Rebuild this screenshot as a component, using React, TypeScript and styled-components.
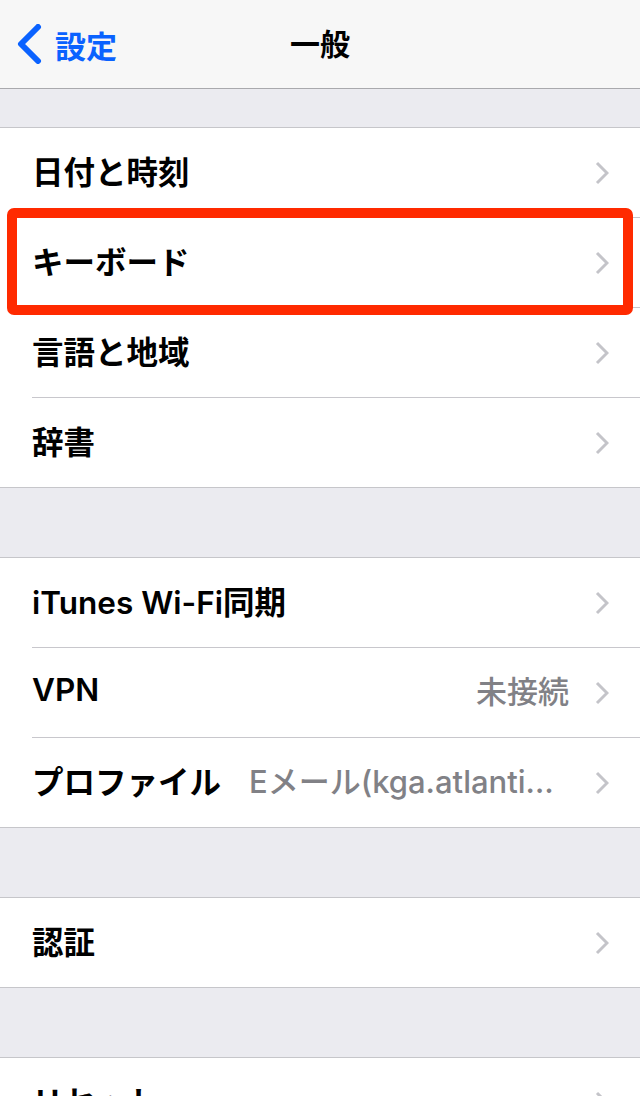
import React from "react";
import styled, { createGlobalStyle } from "styled-components";

const GlobalStyle = createGlobalStyle`
  html, body {
    margin: 0;
    padding: 0;
    background: #ebebf0;
  }
  body {
    font-family: "Inter", "Noto Sans CJK JP", sans-serif;
    -webkit-font-smoothing: antialiased;
  }
`;

const Page = styled.div`
  width: 640px;
  height: 1096px;
  overflow: hidden;
  background: #ebebf0;
`;

const NavBar = styled.header`
  position: relative;
  height: 89px;
  display: flex;
  align-items: center;
  justify-content: center;
  background: #f7f7f7;
  border-bottom: 1px solid #a9a9ad;
  box-sizing: border-box;
`;

const BackButton = styled.div`
  position: absolute;
  left: 16px;
  top: 0;
  bottom: 0;
  display: flex;
  align-items: center;
  gap: 13px;
  color: #0a62ff;
  font-size: 31px;
  font-weight: 600;
`;

const Title = styled.h1`
  margin: 0 0 4px;
  font-size: 30px;
  font-weight: 700;
  color: #000;
`;

const Gap = styled.div<{ $h: number }>`
  height: ${(p) => p.$h}px;
`;

const Group = styled.section`
  background: #fff;
  border-top: 1px solid #c6c6ca;
  border-bottom: 1px solid #c6c6ca;
`;

const RowInner = styled.div<{ $divider: boolean }>`
  height: 89px;
  display: flex;
  align-items: center;
  padding-right: 31px;
  border-bottom: ${(p) => (p.$divider ? "1px solid #c8c7cc" : "none")};
`;

const RowWrap = styled.div`
  position: relative;
  padding-left: 32px;
`;

const Label = styled.span`
  margin-bottom: 6px;
  font-size: 31.5px;
  font-weight: 600;
  color: #000;
  white-space: nowrap;
  flex-shrink: 0;
`;

const Value = styled.span`
  flex: 1;
  min-width: 0;
  margin-left: 28px;
  margin-right: 26px;
  margin-bottom: 6px;
  text-align: right;
  font-size: 31px;
  font-weight: 500;
  color: #818186;
  white-space: nowrap;
  overflow: hidden;
  text-overflow: ellipsis;
`;

const Spacer = styled.span`
  flex: 1;
`;

const Highlight = styled.div`
  position: absolute;
  left: 7px;
  right: 7px;
  top: -10px;
  bottom: -7px;
  border: 10px solid #ff2a00;
  border-radius: 7px;
  pointer-events: none;
`;

const Chevron = () => (
  <svg width="14" height="24" viewBox="0 0 14 24" style={{ flexShrink: 0 }}>
    <path
      d="M2 2 L12 12 L2 22"
      fill="none"
      stroke="#c4c4c9"
      strokeWidth="3"
      strokeLinecap="butt"
      strokeLinejoin="miter"
    />
  </svg>
);

const BackChevron = () => (
  <svg width="26" height="40" viewBox="0 0 26 40">
    <path
      d="M22 3 L5 20 L22 37"
      fill="none"
      stroke="#0a62ff"
      strokeWidth="6"
      strokeLinecap="round"
      strokeLinejoin="round"
    />
  </svg>
);

type Item = { label: string; value?: string; highlight?: boolean };

function Row({ label, value, highlight, last }: Item & { last: boolean }) {
  return (
    <RowWrap>
      <RowInner $divider={!last}>
        <Label>{label}</Label>
        {value ? <Value>{value}</Value> : <Spacer />}
        <Chevron />
      </RowInner>
      {highlight && <Highlight />}
    </RowWrap>
  );
}

const groups: Item[][] = [
  [
    { label: "日付と時刻" },
    { label: "キーボード", highlight: true },
    { label: "言語と地域" },
    { label: "辞書" },
  ],
  [
    { label: "iTunes Wi-Fi同期" },
    { label: "VPN", value: "未接続" },
    { label: "プロファイル", value: "Eメール(kga.atlantis@gmail.com)" },
  ],
  [{ label: "認証" }],
  [{ label: "リセット" }],
];

export default function App() {
  return (
    <Page>
      <GlobalStyle />
      <NavBar>
        <BackButton>
          <BackChevron />
          <span>設定</span>
        </BackButton>
        <Title>一般</Title>
      </NavBar>
      {groups.map((g, i) => (
        <React.Fragment key={i}>
          <Gap $h={i === 0 ? 38 : 69} />
          <Group>
            {g.map((item, j) => (
              <Row key={item.label} {...item} last={j === g.length - 1} />
            ))}
          </Group>
        </React.Fragment>
      ))}
    </Page>
  );
}
